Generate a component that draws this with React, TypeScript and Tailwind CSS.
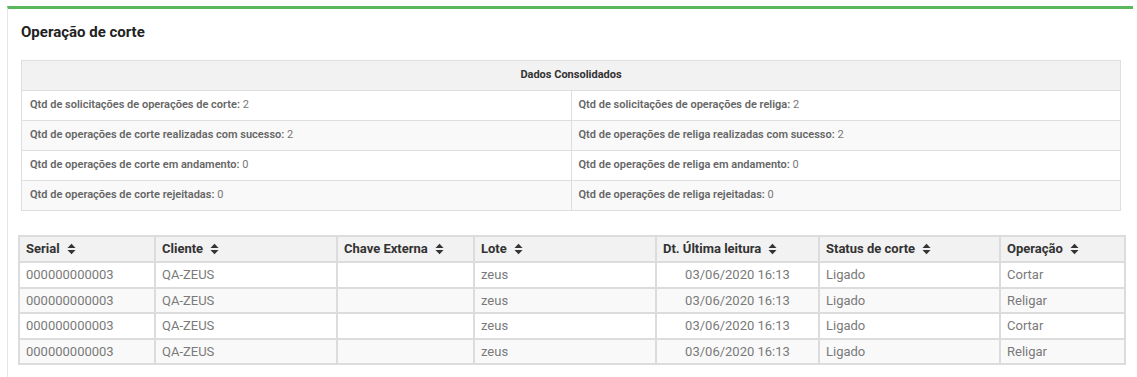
const STATS = [
  ["Qtd de solicitações de operações de corte:", "2", "Qtd de solicitações de operações de religa:", "2"],
  ["Qtd de operações de corte realizadas com sucesso:", "2", "Qtd de operações de religa realizadas com sucesso:", "2"],
  ["Qtd de operações de corte em andamento:", "0", "Qtd de operações de religa em andamento:", "0"],
  ["Qtd de operações de corte rejeitadas:", "0", "Qtd de operações de religa rejeitadas:", "0"],
];

const COLS = [
  { label: "Serial", w: "w-[136px]" },
  { label: "Cliente", w: "w-[182px]" },
  { label: "Chave Externa", w: "w-[137px]" },
  { label: "Lote", w: "w-[182px]" },
  { label: "Dt. Última leitura", w: "w-[163px]" },
  { label: "Status de corte", w: "w-[181px]" },
  { label: "Operação", w: "" },
];

const ROWS = ["Cortar", "Religar", "Cortar", "Religar"];

function SortIcon() {
  return (
    <svg width="9" height="12" viewBox="0 0 9 12" className="inline-block ml-[7px] -mt-[2px]">
      <path d="M0.5 5 L4.5 0.8 L8.5 5 Z" fill="#333" />
      <path d="M0.5 7 L4.5 11.2 L8.5 7 Z" fill="#333" />
    </svg>
  );
}

export default function App() {
  return (
    <div className="w-[1137px] h-[377px] bg-white overflow-hidden pl-[7px] pt-[6px] font-['Roboto',sans-serif]">
      <div className="w-[1126px] h-[400px] border-t-[3px] border-[#5cb85c] border-l border-l-[#e6e6e6]">
        <h2 className="pl-[13px] pt-[13px] text-[15px] font-bold text-[#222] leading-[20px]">Operação de corte</h2>

        <table className="ml-[13px] mt-[18px] w-[1100px] border-collapse border border-[#dedede] text-[11px] table-fixed">
          <thead>
            <tr className="bg-[#f2f2f2] h-[30px]">
              <th colSpan={2} className="font-bold text-[#333] border border-[#dedede]">Dados Consolidados</th>
            </tr>
          </thead>
          <tbody>
            {STATS.map((r, i) => (
              <tr key={i} className={`h-[30px] ${i % 2 ? "bg-[#f9f9f9]" : "bg-white"}`}>
                <td className="w-[551px] border border-[#dedede] pl-[8px] text-[#777]">
                  <span className="font-semibold text-[#666]">{r[0]}</span> {r[1]}
                </td>
                <td className="border border-[#dedede] pl-[7px] text-[#777]">
                  <span className="font-semibold text-[#666]">{r[2]}</span> {r[3]}
                </td>
              </tr>
            ))}
          </tbody>
        </table>

        <table className="ml-[10px] mt-[24px] w-[1108px] border-collapse border-2 border-[#dcdcdc] text-[13px] table-fixed">
          <thead>
            <tr className="bg-[#f2f2f2] h-[26px]">
              {COLS.map((c) => (
                <th key={c.label} className={`${c.w} border-2 border-[#dcdcdc] text-left pl-[6px] font-bold text-[#333] py-0`}>
                  {c.label}
                  <SortIcon />
                </th>
              ))}
            </tr>
          </thead>
          <tbody className="text-[#7a7a7a]">
            {ROWS.map((op, i) => (
              <tr key={i} className={`h-[25.6px] ${i % 2 ? "bg-[#f9f9f9]" : "bg-white"}`}>
                <td className="border-2 border-[#dcdcdc] pl-[6px]">000000000003</td>
                <td className="border-2 border-[#dcdcdc] pl-[6px]">QA-ZEUS</td>
                <td className="border-2 border-[#dcdcdc] pl-[6px]"></td>
                <td className="border-2 border-[#dcdcdc] pl-[6px]">zeus</td>
                <td className="border-2 border-[#dcdcdc] text-center">03/06/2020 16:13</td>
                <td className="border-2 border-[#dcdcdc] pl-[6px]">Ligado</td>
                <td className="border-2 border-[#dcdcdc] pl-[6px]">{op}</td>
              </tr>
            ))}
          </tbody>
        </table>
      </div>
    </div>
  );
}
